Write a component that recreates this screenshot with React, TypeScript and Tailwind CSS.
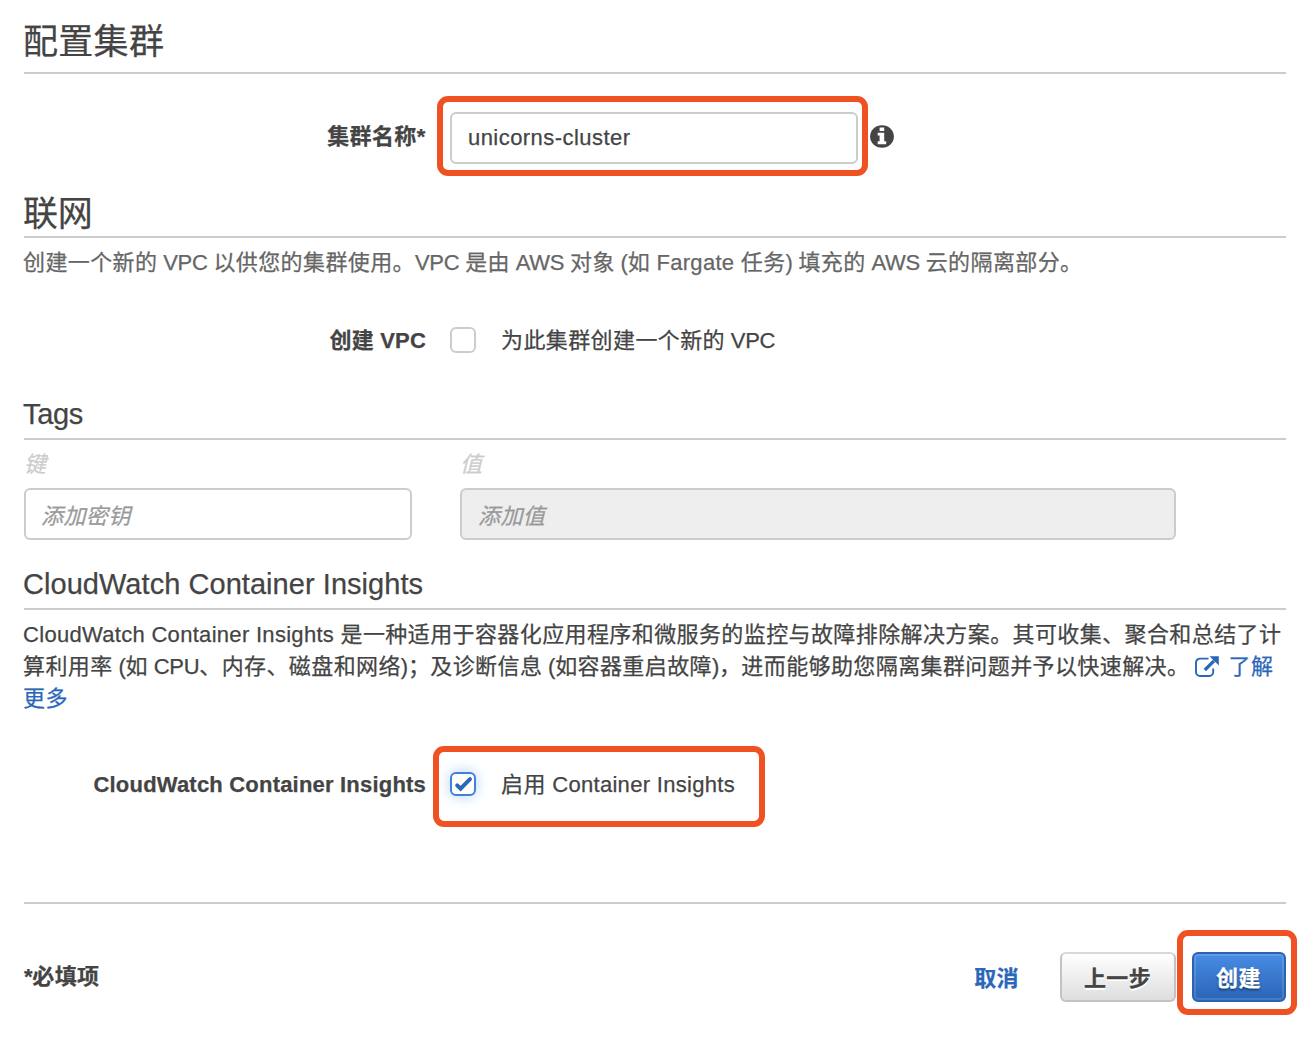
import React from "react";

const CJK = /([\u3000-\u30ff\u4e00-\u9fff\uff00-\uffef]+)/;

/** Sets Chinese, mixed-case Latin and capital runs with their own tracking. */
function Mixed({ children }: { children: string }) {
  return (
    <>
      {children.split(CJK).map((part, i) => {
        const tracking = CJK.test(part)
          ? "tracking-[0.4px]"
          : /[a-z]/.test(part)
            ? "tracking-[0.3px]"
            : "tracking-[-0.3px]";
        return (
          <span key={i} className={tracking}>
            {part}
          </span>
        );
      })}
    </>
  );
}

function Highlight({ className }: { className: string }) {
  return (
    <div
      className={`pointer-events-none absolute border-6 border-[#f05123] ${className}`}
    />
  );
}

function InfoIcon() {
  return (
    <svg width="24" height="23" viewBox="0 0 24 23" className="shrink-0">
      <ellipse cx="12" cy="11.5" rx="11.9" ry="11.3" fill="#444" />
      <path
        d="M9.6 2.5h4.6v3.6H9.6zM7.7 7.700h6.500v8.500h2v3H7.700v-3h1.900v-5.600H7.700z"
        fill="#fff"
      />
    </svg>
  );
}

function ExternalIcon() {
  return (
    <svg
      width="24"
      height="21"
      viewBox="0 0 24 21"
      className="mr-[10px] -ml-px inline-block align-[-3px]"
      fill="none"
    >
      <path
        d="M13.5 2.6H5a4 4 0 0 0-4 4V16a4 4 0 0 0 4 4h9.2a4 4 0 0 0 4-4v-3.5"
        stroke="#2a67b8"
        strokeWidth="1.9"
      />
      <path d="M9.8 14L19 4.8" stroke="#2a67b8" strokeWidth="3.2" />
      <path d="M14.5 0.2H23.8V9.500z" fill="#2a67b8" />
    </svg>
  );
}

export default function App() {
  return (
    <div className="h-[1040px] w-[1316px] overflow-hidden bg-white pr-[30px] pl-6 font-['Liberation_Sans','Noto_Sans_CJK_SC',sans-serif] text-[22px] leading-8 whitespace-nowrap text-[#444] [-webkit-text-stroke:0.25px]">
      <h1 className="h-[74px] border-b-2 border-[#ccc] pt-[17px] -indent-px text-[35px] leading-[50px] tracking-[0.3px]">
        配置集群
      </h1>

      <div className="relative mt-[38px] flex h-[52px] items-center">
        <label className="w-[401px] pb-[2px] text-right font-bold">
          <Mixed>集群名称*</Mixed>
        </label>
        <div className="ml-[25px] flex h-[52px] w-[408px] items-center rounded-md border-2 border-[#ccc] px-4 tracking-[0.45px]">
          unicorns-cluster
        </div>
        <div className="ml-3 pb-[3px]">
          <InfoIcon />
        </div>
        <Highlight className="top-[-16px] left-[413px] h-[80px] w-[431px] rounded-[11px]" />
      </div>

      <h2 className="mt-[26px] h-[48px] border-b-2 border-[#ccc] -indent-px text-[35px] leading-[48px] tracking-[-0.2px]">
        联网
      </h2>
      <p className="mt-[9px] -indent-px text-[#666]">
        <Mixed>
          创建一个新的 VPC 以供您的集群使用。VPC 是由 AWS 对象 (如 Fargate 任务) 填充的 AWS 云的隔离部分。
        </Mixed>
      </p>

      <div className="mt-[45px] flex h-8 items-center">
        <label className="w-[402px] pt-px text-right font-bold tracking-[0.2px]">
          创建 VPC
        </label>
        <span className="ml-6 h-[26px] w-[26px] rounded-md border-2 border-[#ccc]" />
        <span className="ml-[25px] pt-[2px]">
          <Mixed>为此集群创建一个新的 VPC</Mixed>
        </span>
      </div>

      <h3 className="mt-[38px] h-[46px] border-b-2 border-[#ccc] -indent-px text-[29px] leading-[40px] tracking-[-0.3px]">
        Tags
      </h3>
      <div className="mt-[9px] flex gap-12 italic">
        <div className="w-[388px]">
          <div className="text-[#ccc]">键</div>
          <div className="mt-[7px] flex h-[52px] items-center rounded-md border-2 border-[#ccc] pt-[5px] pl-[15px] text-[#999]">
            <Mixed>添加密钥</Mixed>
          </div>
        </div>
        <div className="w-[716px]">
          <div className="text-[#ccc]">值</div>
          <div className="mt-[7px] flex h-[52px] items-center rounded-md border-2 border-[#ccc] bg-[#eee] pt-[5px] pl-4 text-[#999]">
            <Mixed>添加值</Mixed>
          </div>
        </div>
      </div>

      <h3 className="mt-[24px] h-[46px] border-b-2 border-[#ccc] -indent-px text-[29px] leading-[40px] tracking-[0.05px]">
        CloudWatch Container Insights
      </h3>
      <p className="mt-[9px] -ml-px">
        <Mixed>
          CloudWatch Container Insights 是一种适用于容器化应用程序和微服务的监控与故障排除解决方案。其可收集、聚合和总结了计
        </Mixed>
        <br />
        <Mixed>
          算利用率 (如 CPU、内存、磁盘和网络)；及诊断信息 (如容器重启故障)，进而能够助您隔离集群问题并予以快速解决。
        </Mixed>{" "}
        <a className="text-[#2a67b8]">
          <ExternalIcon />
          <Mixed>了解</Mixed>
          <br />
          <Mixed>更多</Mixed>
        </a>
      </p>

      <div className="relative mt-[53px] flex h-8 items-center">
        <label className="w-[402px] pt-px text-right font-bold tracking-[0.2px]">
          CloudWatch Container Insights
        </label>
        <span className="ml-6 flex h-[24px] w-[26px] items-center justify-center rounded-md border-2 border-[#3f82d8] bg-white shadow-[0_0_14px_#b4d0f5]">
          <svg width="20" height="18" viewBox="0 0 20 18" fill="none" className="shrink-0">
            <path
              d="M4.2 10.300L7.600 13.700L17 4.200"
              stroke="#2a67b8"
              strokeWidth="4"
              strokeLinecap="round"
            />
          </svg>
        </span>
        <span className="ml-[25px] pt-[2px]">
          <Mixed>启用 Container Insights</Mixed>
        </span>
        <Highlight className="top-[-22px] left-[409px] h-[81px] w-[332px] rounded-[11px]" />
      </div>

      <div className="mt-[102px] h-[2px] bg-[#ccc]" />

      <div className="relative mt-12 flex h-[50px] items-center font-bold">
        <span className="flex-1">
          <Mixed>*必填项</Mixed>
        </span>
        <a className="mr-[41px] pt-[3px] text-[#2a67b8]">
          <Mixed>取消</Mixed>
        </a>
        <button className="h-[50px] w-[116px] rounded-md border-2 border-[#c3c3c3] border-t-[#d8d8d8] bg-linear-to-b from-white to-[#dedede] pt-[3px] pr-px font-bold [text-shadow:0_2px_0_#fff]">
          <Mixed>上一步</Mixed>
        </button>
        <button className="ml-4 h-[50px] w-[94px] rounded-md border-2 border-[#2a63b4] bg-linear-to-b from-[#478ce4] to-[#2a65b6] pt-[3px] pr-px font-bold text-white shadow-[inset_0_0_0_2px_#ffffff22] [text-shadow:0_2px_2px_#1b3f70]">
          <Mixed>创建</Mixed>
        </button>
        <Highlight className="top-[-22px] right-[-11px] h-[85px] w-[120px] rounded-[11px]" />
      </div>
    </div>
  );
}
